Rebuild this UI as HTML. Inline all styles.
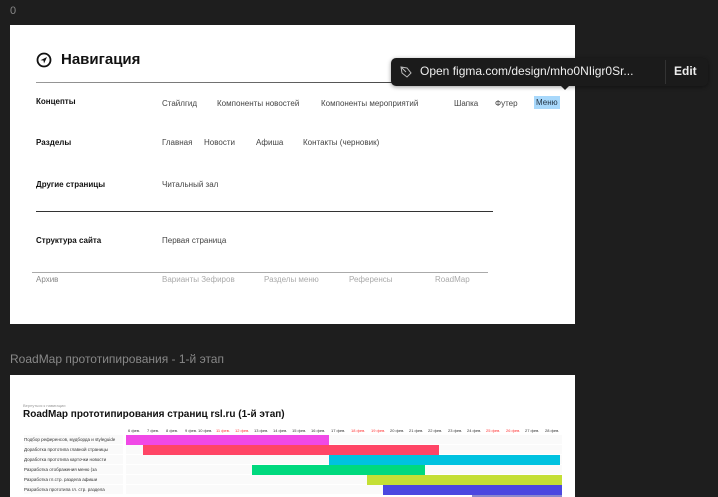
<!DOCTYPE html>
<html style="overflow:hidden;height:497px"><head><meta charset="utf-8"><style>
body{margin:0;width:718px;height:497px;background:#1e1e1e;overflow:hidden;position:relative;font-family:"Liberation Sans",sans-serif}
.a{position:absolute;white-space:nowrap}
.f{position:absolute;background:#fff}
.nl{font-size:8px;color:#444}
.b{font-size:8px;font-weight:bold;color:#111}
.g{font-size:8px;color:#aaa}
.lab{position:absolute;left:24px;width:99px;height:9px;font-size:4.5px;color:#333;line-height:9px;background:#fafafa;overflow:hidden}
.row{position:absolute;left:126px;width:436px;height:9px;background:#fafafa}
.bar{position:absolute;height:10px}
.d{position:absolute;top:428px;font-size:4px;color:#333}
</style></head><body>
<div class="a" style="left:10px;top:5px;font-size:11px;color:#888">0</div>
<div class="f" style="left:10px;top:25px;width:565px;height:299px"></div>
<svg class="a" style="left:36px;top:52px" width="16" height="16" viewBox="0 0 16 16"><circle cx="8" cy="8" r="6.5" fill="none" stroke="#111" stroke-width="1.8"/><path d="M11 5 L4.5 8.2 L7.5 8.5 L8 11.5Z" fill="#111"/></svg>
<div class="a" style="left:61px;top:51px;font-size:15px;font-weight:bold;color:#111">Навигация</div>
<div class="a" style="left:36px;top:82px;width:455px;height:1px;background:linear-gradient(90deg,#999,#333)"></div>
<div class="a b" style="left:36px;top:97px">Концепты</div>
<div class="a nl" style="left:162px;top:99px">Стайлгид</div>
<div class="a nl" style="left:217px;top:99px">Компоненты новостей</div>
<div class="a nl" style="left:321px;top:99px">Компоненты мероприятий</div>
<div class="a nl" style="left:454px;top:99px">Шапка</div>
<div class="a nl" style="left:495px;top:99px">Футер</div>
<div class="a nl" style="left:534px;top:96px;background:#a8d8fb;color:#234;padding:2px 2px">Меню</div>
<div class="a b" style="left:36px;top:138px">Разделы</div>
<div class="a nl" style="left:162px;top:138px">Главная</div>
<div class="a nl" style="left:204px;top:138px">Новости</div>
<div class="a nl" style="left:256px;top:138px">Афиша</div>
<div class="a nl" style="left:303px;top:138px">Контакты (черновик)</div>
<div class="a b" style="left:36px;top:180px">Другие страницы</div>
<div class="a nl" style="left:162px;top:180px">Читальный зал</div>
<div class="a" style="left:36px;top:211px;width:457px;height:1px;background:#333"></div>
<div class="a b" style="left:36px;top:236px">Структура сайта</div>
<div class="a nl" style="left:162px;top:236px">Первая страница</div>
<div class="a" style="left:32px;top:272px;width:456px;height:1px;background:#aaa"></div>
<div class="a g" style="left:36px;top:275px;color:#888">Архив</div>
<div class="a g" style="left:162px;top:275px">Варианты Зефиров</div>
<div class="a g" style="left:264px;top:275px">Разделы меню</div>
<div class="a g" style="left:349px;top:275px">Референсы</div>
<div class="a g" style="left:435px;top:275px">RoadMap</div>
<div class="a" style="left:391px;top:58px;width:317px;height:28px;background:#1b1b1b;border-radius:5px;box-shadow:0 1px 4px rgba(0,0,0,.4)"></div>
<div class="a" style="left:560px;top:85px;width:0;height:0;border-left:5px solid transparent;border-right:5px solid transparent;border-top:5px solid #1b1b1b"></div>
<svg class="a" style="left:399px;top:65px" width="14" height="14" viewBox="0 0 14 14"><path d="M2 2 L8 3 L12 8 L8 12 L3 8Z M2 2 L7 7" fill="none" stroke="#bbb" stroke-width="1"/></svg>
<div class="a" style="left:420px;top:64px;font-size:12px;color:#eee">Open figma.com/design/mho0NIigr0Sr...</div>
<div class="a" style="left:665px;top:60px;width:1px;height:24px;background:#333"></div>
<div class="a" style="left:674px;top:64px;font-size:12px;font-weight:bold;color:#eee">Edit</div>
<div class="a" style="left:10px;top:352px;font-size:12px;color:#888">RoadMap прототипирования - 1-й этап</div>
<div class="f" style="left:10px;top:375px;width:565px;height:122px"></div>
<div class="a" style="left:23px;top:403px;font-size:4px;color:#999">Вернуться к навигации</div>
<div class="a" style="left:23px;top:409px;font-size:10px;font-weight:bold;color:#111">RoadMap прототипирования страниц rsl.ru (1-й этап)</div>
<div class="d" style="left:128px">6 фев.</div><div class="d" style="left:147px">7 фев.</div><div class="d" style="left:166px">8 фев.</div><div class="d" style="left:185px">9 фев.</div><div class="d" style="left:198px">10 фев.</div><div class="d" style="left:216px;color:#f33">11 фев.</div><div class="d" style="left:235px;color:#f33">12 фев.</div><div class="d" style="left:254px">13 фев.</div><div class="d" style="left:273px">14 фев.</div><div class="d" style="left:292px">15 фев.</div><div class="d" style="left:311px">16 фев.</div><div class="d" style="left:331px">17 фев.</div><div class="d" style="left:351px;color:#f33">18 фев.</div><div class="d" style="left:371px;color:#f33">19 фев.</div><div class="d" style="left:390px">20 фев.</div><div class="d" style="left:409px">21 фев.</div><div class="d" style="left:428px">22 фев.</div><div class="d" style="left:448px">23 фев.</div><div class="d" style="left:467px">24 фев.</div><div class="d" style="left:486px;color:#f33">25 фев.</div><div class="d" style="left:506px;color:#f33">26 фев.</div><div class="d" style="left:525px">27 фев.</div><div class="d" style="left:545px">28 фев.</div>
<div class="lab" style="top:435px">Подбор референсов, мудборда и styleguide</div><div class="row" style="top:435px"></div>
<div class="lab" style="top:445px">Доработка прототипа главной страницы</div><div class="row" style="top:445px"></div>
<div class="lab" style="top:455px">Доработка прототипа карточки новости</div><div class="row" style="top:455px"></div>
<div class="lab" style="top:465px">Разработка отображения меню (за гамбургером)</div><div class="row" style="top:465px"></div>
<div class="lab" style="top:475px">Разработка гл.стр. раздела афиши</div><div class="row" style="top:475px"></div>
<div class="lab" style="top:485px">Разработка прототипа гл. стр. раздела новостей</div><div class="row" style="top:485px"></div>
<div class="bar" style="left:126px;top:435px;width:203px;background:#f049e6"></div>
<div class="bar" style="left:143px;top:445px;width:296px;background:#ff4566"></div>
<div class="bar" style="left:329px;top:455px;width:231px;background:#00c2e0"></div>
<div class="bar" style="left:252px;top:465px;width:173px;background:#00d97e"></div>
<div class="bar" style="left:367px;top:475px;width:195px;background:#c4df35"></div>
<div class="bar" style="left:383px;top:485px;width:179px;background:#4b47e0"></div>
<div class="bar" style="left:472px;top:495px;width:90px;height:2px;background:#8a88cc"></div>
</body></html>
